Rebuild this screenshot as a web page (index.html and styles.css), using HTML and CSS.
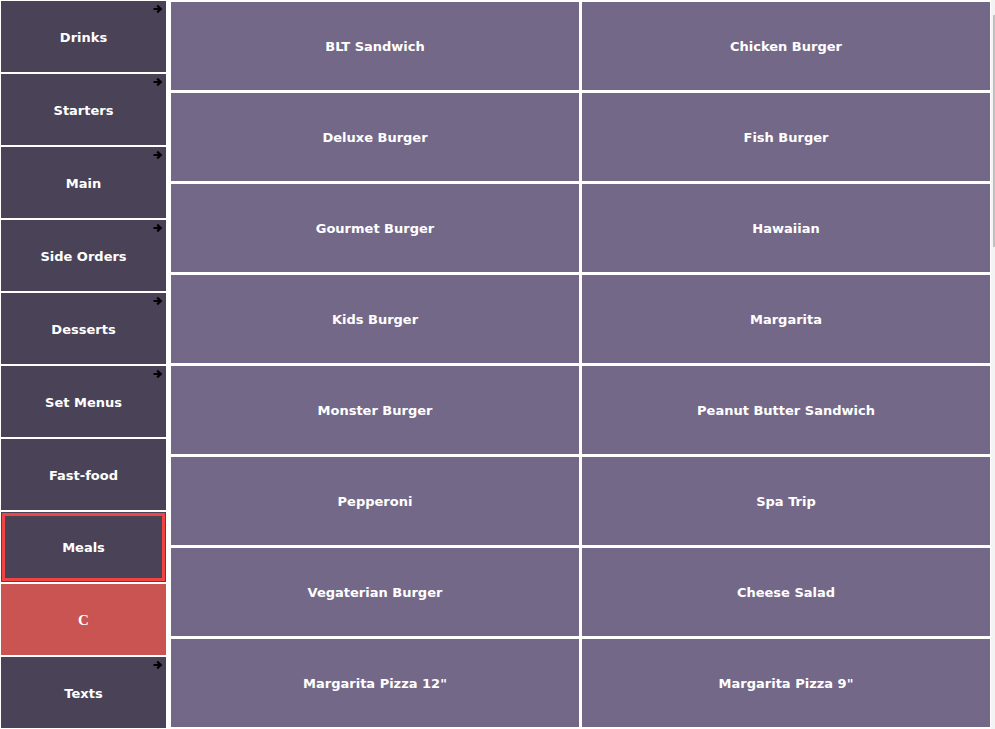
FILE: index.html
```html
<!DOCTYPE html>
<html>
<head>
<meta charset="utf-8">
<link rel="stylesheet" href="styles.css">
</head>
<body>
<div class="app">
  <nav class="cats">
    <div class="cat has-sub">Drinks<svg class="arrow" viewBox="0 0 10 10"><path d="M0.5 5H7M4.2 1.6L7.8 5L4.2 8.4"/></svg></div>
    <div class="cat has-sub">Starters<svg class="arrow" viewBox="0 0 10 10"><path d="M0.5 5H7M4.2 1.6L7.8 5L4.2 8.4"/></svg></div>
    <div class="cat has-sub">Main<svg class="arrow" viewBox="0 0 10 10"><path d="M0.5 5H7M4.2 1.6L7.8 5L4.2 8.4"/></svg></div>
    <div class="cat has-sub">Side Orders<svg class="arrow" viewBox="0 0 10 10"><path d="M0.5 5H7M4.2 1.6L7.8 5L4.2 8.4"/></svg></div>
    <div class="cat has-sub">Desserts<svg class="arrow" viewBox="0 0 10 10"><path d="M0.5 5H7M4.2 1.6L7.8 5L4.2 8.4"/></svg></div>
    <div class="cat has-sub">Set Menus<svg class="arrow" viewBox="0 0 10 10"><path d="M0.5 5H7M4.2 1.6L7.8 5L4.2 8.4"/></svg></div>
    <div class="cat">Fast-food</div>
    <div class="cat selected">Meals</div>
    <div class="cat clear">C</div>
    <div class="cat has-sub">Texts<svg class="arrow" viewBox="0 0 10 10"><path d="M0.5 5H7M4.2 1.6L7.8 5L4.2 8.4"/></svg></div>
  </nav>
  <main class="items">
    <div class="grid">
      <div class="item">BLT Sandwich</div>
      <div class="item">Chicken Burger</div>
      <div class="item">Deluxe Burger</div>
      <div class="item">Fish Burger</div>
      <div class="item">Gourmet Burger</div>
      <div class="item">Hawaiian</div>
      <div class="item">Kids Burger</div>
      <div class="item">Margarita</div>
      <div class="item">Monster Burger</div>
      <div class="item">Peanut Butter Sandwich</div>
      <div class="item">Pepperoni</div>
      <div class="item">Spa Trip</div>
      <div class="item">Vegaterian Burger</div>
      <div class="item">Cheese Salad</div>
      <div class="item">Margarita Pizza 12"</div>
      <div class="item">Margarita Pizza 9"</div>
    </div>
    <div class="scrollbar"><div class="thumb"></div></div>
  </main>
</div>
</body>
</html>
```

FILE: styles.css
```css
html, body {
  margin: 0;
  padding: 0;
  background: #ffffff;
  overflow: hidden;
}

body {
  font-family: "DejaVu Sans", Verdana, sans-serif;
  font-weight: bold;
  font-size: 13px;
  color: #ffffff;
}

.app {
  display: flex;
  height: 729px;
}

.cats {
  display: flex;
  flex-direction: column;
  gap: 2px;
  padding: 1px 0 0 1px;
  width: 165px;
  flex: 0 0 165px;
}

.cat {
  position: relative;
  height: 71px;
  flex: 0 0 71px;
  display: flex;
  align-items: center;
  justify-content: center;
  background: #4a4358;
  box-sizing: border-box;
  padding-top: 1px;
}

.cat.selected {
  flex-basis: 70px;
  height: 70px;
  box-shadow: inset 0 0 0 1px #4a4358, inset 0 0 0 4px #ee4444;
}

.cat.clear {
  background: #c95451;
  font-family: "Liberation Serif", "Times New Roman", serif;
  font-size: 15px;
}

.arrow {
  position: absolute;
  top: 3px;
  right: 3px;
  width: 10px;
  height: 10px;
  fill: none;
  stroke: #000000;
  stroke-width: 2.2;
}

.items {
  margin-left: 5px;
  flex: 1;
  height: 729px;
  display: flex;
}

.grid {
  display: grid;
  grid-template-columns: 408px 408px;
  grid-auto-rows: 88px;
  gap: 3px;
  padding-top: 2px;
  align-content: start;
}

.item {
  display: flex;
  align-items: center;
  justify-content: center;
  background: #746888;
  text-align: center;
  padding-top: 1px;
}

.scrollbar {
  margin-left: 1px;
  width: 5px;
  height: 729px;
  background: #f3f3f3;
  padding-top: 15px;
  box-sizing: border-box;
}

.thumb {
  width: 2px;
  height: 232px;
  margin-left: 2px;
  background: #c1c1c1;
}
```
